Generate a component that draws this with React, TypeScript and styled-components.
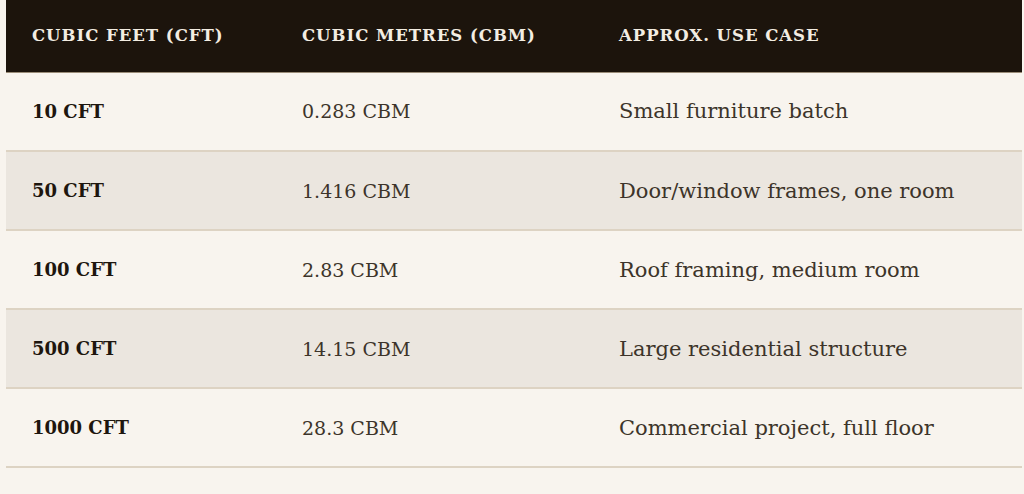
import React from 'react';
import styled, { createGlobalStyle } from 'styled-components';

const GlobalStyle = createGlobalStyle`
  html, body {
    margin: 0;
    padding: 0;
    background: #f8f4ee;
  }
`;

const Page = styled.div`
  padding: 0 2px 0 6px;
  background: #f8f4ee;
  height: 494px;
  box-sizing: border-box;
`;

const Table = styled.table`
  width: 100%;
  border-collapse: collapse;
  table-layout: fixed;
  font-family: "DejaVu Serif", "Liberation Serif", serif;
`;

const HeadCell = styled.th<{ $width: number }>`
  width: ${(p) => p.$width}px;
  background: #1c140c;
  color: #f3ede2;
  text-align: left;
  font-size: 16.5px;
  font-weight: 700;
  letter-spacing: 0.06em;
  text-transform: uppercase;
  height: 72px;
  padding: 0 0 0 26px;
  border-bottom: 1px solid #9a8c78;
  box-sizing: border-box;
`;

const Row = styled.tr<{ $alt: boolean }>`
  background: ${(p) => (p.$alt ? '#ebe6df' : '#f8f4ee')};
  border-bottom: 2px solid #ddd3c3;
`;

const Cell = styled.td<{ $strong?: boolean; $size: number }>`
  height: 79px;
  padding: 0 0 0 26px;
  font-size: ${(p) => p.$size}px;
  color: ${(p) => (p.$strong ? '#1e160e' : '#3d342a')};
  font-weight: ${(p) => (p.$strong ? 700 : 400)};
  box-sizing: border-box;
`;

const rows = [
  ['10 CFT', '0.283 CBM', 'Small furniture batch'],
  ['50 CFT', '1.416 CBM', 'Door/window frames, one room'],
  ['100 CFT', '2.83 CBM', 'Roof framing, medium room'],
  ['500 CFT', '14.15 CBM', 'Large residential structure'],
  ['1000 CFT', '28.3 CBM', 'Commercial project, full floor'],
];

export default function App() {
  return (
    <Page>
      <GlobalStyle />
      <Table>
        <thead>
          <tr>
            <HeadCell $width={270}>Cubic Feet (CFT)</HeadCell>
            <HeadCell $width={317}>Cubic Metres (CBM)</HeadCell>
            <HeadCell $width={429}>Approx. Use Case</HeadCell>
          </tr>
        </thead>
        <tbody>
          {rows.map((r, i) => (
            <Row key={r[0]} $alt={i % 2 === 1}>
              <Cell $strong $size={18}>{r[0]}</Cell>
              <Cell $size={19}>{r[1]}</Cell>
              <Cell $size={21}>{r[2]}</Cell>
            </Row>
          ))}
        </tbody>
      </Table>
    </Page>
  );
}
